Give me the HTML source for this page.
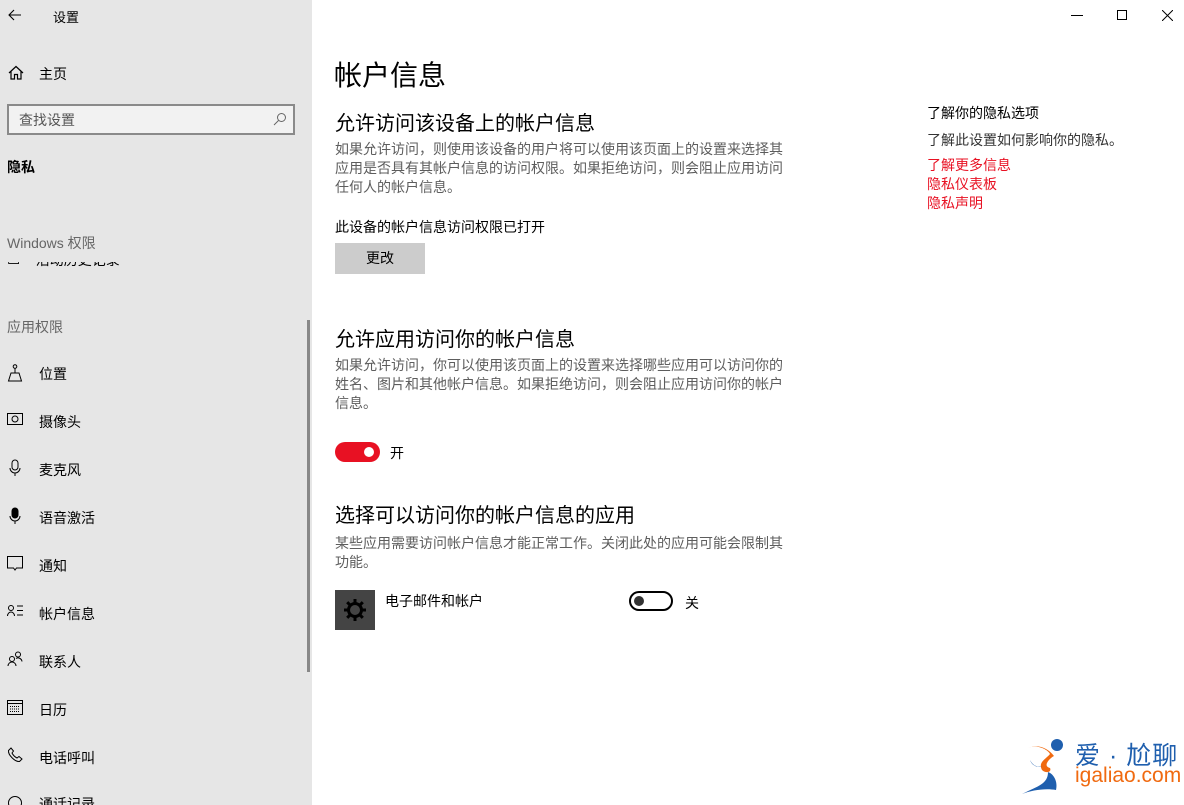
<!DOCTYPE html>
<html style="height:805px;overflow:hidden"><head><meta charset="utf-8"><style>
*{margin:0;padding:0;box-sizing:border-box}
body{width:1184px;height:805px;overflow:hidden;background:#fff;font-family:"Liberation Sans","Noto Sans CJK SC",sans-serif;color:#000;position:relative}
.a{position:absolute;white-space:nowrap}
#side{position:absolute;left:0;top:0;width:312px;height:805px;background:#e6e6e6;overflow:hidden}
.nav{font-size:14px}
.ic{position:absolute;left:7px}
.g{color:#5d5d5d;font-size:14px;line-height:19px}
.h2{font-size:20px}
.r{color:#e81123;font-size:14px}
</style></head><body>
<div id="side">
<svg class="a" style="left:8px;top:9px" width="14" height="12" viewBox="0 0 14 12" fill="none" stroke="#000" stroke-width="1.1"><path d="M13 6H1M6 1L1 6L6 11"/></svg>
<div class="a" style="left:53px;top:7px;font-size:13px">设置</div>
<svg class="a" style="left:8px;top:65px" width="16" height="16" viewBox="0 0 16 16" fill="none" stroke="#000" stroke-width="1.2"><path d="M1 8L8 1.5L15 8M3 6.5V14H6.5V9.5H9.5V14H13V6.5"/></svg>
<div class="a nav" style="left:39px;top:64px">主页</div>
<div class="a" style="left:7px;top:104px;width:288px;height:31px;border:2px solid #8a8a8a;background:#f2f2f2"></div>
<div class="a" style="left:19px;top:110px;font-size:14px;color:#555">查找设置</div>
<svg class="a" style="left:273px;top:112px" width="14" height="14" viewBox="0 0 14 14" fill="none" stroke="#666" stroke-width="1"><circle cx="8.5" cy="5.5" r="4"/><path d="M5.5 8.5L1 13"/></svg>
<div class="a" style="left:7px;top:157px;font-size:14px;font-weight:bold">隐私</div>
<div class="a" style="left:7px;top:233px;font-size:14px;color:#666">Windows 权限</div>
<div class="a" style="left:7px;top:262px;height:6px;overflow:hidden;width:200px"><div style="margin-top:-12px;font-size:14px">▭&nbsp;&nbsp;&nbsp; 活动历史记录</div></div>
<div class="a" style="left:7px;top:317px;font-size:14px;color:#666">应用权限</div>
<div class="a" style="left:307px;top:320px;width:3px;height:352px;background:#888"></div>

<svg class="ic a" style="top:364px" width="16" height="18" viewBox="0 0 16 18" fill="none" stroke="#000" stroke-width="1"><circle cx="8" cy="2.5" r="1.8"/><path d="M8 4.5V9M4 9H12L14.5 17H1.5Z"/></svg>
<div class="a nav" style="left:39px;top:364px">位置</div>
<svg class="ic a" style="top:412px" width="16" height="14" viewBox="0 0 16 14" fill="none" stroke="#000" stroke-width="1"><rect x="0.5" y="1.5" width="15" height="11"/><circle cx="8" cy="7" r="3"/></svg>
<div class="a nav" style="left:39px;top:412px">摄像头</div>
<svg class="ic a" style="top:459px" width="16" height="18" viewBox="0 0 16 18" fill="none" stroke="#000" stroke-width="1"><rect x="5" y="1" width="6" height="10" rx="3"/><path d="M3 9a5 5 0 0 0 10 0M8 14V17"/></svg>
<div class="a nav" style="left:39px;top:460px">麦克风</div>
<svg class="ic a" style="top:507px" width="16" height="18" viewBox="0 0 16 18" stroke="#000" stroke-width="1"><rect x="5" y="1" width="6" height="10" rx="3" fill="#000"/><path fill="none" d="M3 9a5 5 0 0 0 10 0M8 14V17"/></svg>
<div class="a nav" style="left:39px;top:508px">语音激活</div>
<svg class="ic a" style="top:556px" width="16" height="16" viewBox="0 0 16 16" fill="none" stroke="#000" stroke-width="1"><path d="M0.5 0.5H15.5V12H9.5L8 14L6.5 12H0.5Z"/></svg>
<div class="a nav" style="left:39px;top:556px">通知</div>
<svg class="ic a" style="top:604px" width="17" height="14" viewBox="0 0 17 14" fill="none" stroke="#000" stroke-width="1"><circle cx="4" cy="4" r="2.5"/><path d="M0.5 12a3.5 4 0 0 1 7 0M10 2H16M10 6.5H16M10 11H16"/></svg>
<div class="a nav" style="left:39px;top:604px">帐户信息</div>
<svg class="ic a" style="top:651px" width="16" height="16" viewBox="0 0 16 16" fill="none" stroke="#000" stroke-width="1"><circle cx="5" cy="8" r="2.5"/><path d="M1 15a4 4 0 0 1 8 0"/><circle cx="11" cy="3.5" r="2.5"/><path d="M9 7.5a4 4 0 0 1 6 3"/></svg>
<div class="a nav" style="left:39px;top:652px">联系人</div>
<svg class="ic a" style="top:699px" width="16" height="16" viewBox="0 0 16 16" fill="none" stroke="#000" stroke-width="1"><rect x="0.5" y="1.5" width="15" height="14"/><path d="M0.5 4.5H15.5"/><path d="M3 7.5H13M3 10H13M3 12.5H13" stroke-dasharray="1 1"/></svg>
<div class="a nav" style="left:39px;top:700px">日历</div>
<svg class="ic a" style="top:747px" width="16" height="16" viewBox="0 0 16 16" fill="none" stroke="#000" stroke-width="1"><path d="M4 1L1.5 3.5C1 8 8 15 12.5 14.5L15 12L12 9.5L10 11C8 10 6 8 5 6L6.5 4Z"/></svg>
<div class="a nav" style="left:39px;top:748px">电话呼叫</div>
<svg class="ic a" style="top:795px" width="16" height="16" viewBox="0 0 16 16" fill="none" stroke="#000" stroke-width="1"><circle cx="8" cy="8" r="6.5"/></svg>
<div class="a nav" style="left:39px;top:794px">通话记录</div>
</div>

<div class="a" style="left:1071px;top:15px;width:12px;height:1px;background:#000"></div>
<div class="a" style="left:1117px;top:10px;width:10px;height:10px;border:1px solid #000"></div>
<svg class="a" style="left:1162px;top:10px" width="11" height="11" viewBox="0 0 11 11" stroke="#000" stroke-width="1"><path d="M0 0L11 11M11 0L0 11"/></svg>

<div class="a" style="left:334px;top:54px;font-size:28px">帐户信息</div>
<div class="a h2" style="left:335px;top:107px">允许访问该设备上的帐户信息</div>
<div class="a g" style="left:335px;top:140px">如果允许访问，则使用该设备的用户将可以使用该页面上的设置来选择其<br>应用是否具有其帐户信息的访问权限。如果拒绝访问，则会阻止应用访问<br>任何人的帐户信息。</div>
<div class="a" style="left:335px;top:217px;font-size:14px">此设备的帐户信息访问权限已打开</div>
<div class="a" style="left:335px;top:243px;width:90px;height:31px;background:#ccc;font-size:14px;text-align:center;line-height:31px">更改</div>

<div class="a h2" style="left:335px;top:323px">允许应用访问你的帐户信息</div>
<div class="a g" style="left:335px;top:356px">如果允许访问，你可以使用该页面上的设置来选择哪些应用可以访问你的<br>姓名、图片和其他帐户信息。如果拒绝访问，则会阻止应用访问你的帐户<br>信息。</div>
<div class="a" style="left:335px;top:442px;width:45px;height:20px;border-radius:10px;background:#e81123"></div>
<div class="a" style="left:364px;top:447px;width:10px;height:10px;border-radius:5px;background:#fff"></div>
<div class="a" style="left:390px;top:443px;font-size:14px">开</div>

<div class="a h2" style="left:335px;top:499px">选择可以访问你的帐户信息的应用</div>
<div class="a g" style="left:335px;top:534px">某些应用需要访问帐户信息才能正常工作。关闭此处的应用可能会限制其<br>功能。</div>
<div class="a" style="left:335px;top:590px;width:40px;height:40px;background:#444"></div>
<svg class="a" style="left:340px;top:595px" width="30" height="30" viewBox="0 0 30 30"><g stroke="#000" stroke-width="3"><path d="M15 4V26M4 15H26M7.2 7.2L22.8 22.8M22.8 7.2L7.2 22.8"/></g><circle cx="15" cy="15" r="8" fill="#000"/><circle cx="15" cy="15" r="5" fill="#444"/></svg>
<div class="a" style="left:385px;top:591px;font-size:14px">电子邮件和帐户</div>
<div class="a" style="left:629px;top:591px;width:44px;height:20px;border-radius:10px;border:2px solid #000"></div>
<div class="a" style="left:634px;top:596px;width:10px;height:10px;border-radius:5px;background:#333"></div>
<div class="a" style="left:685px;top:593px;font-size:14px">关</div>

<div class="a" style="left:927px;top:103px;font-size:14px">了解你的隐私选项</div>
<div class="a" style="left:927px;top:130px;font-size:14px;color:#333">了解此设置如何影响你的隐私。</div>
<div class="a r" style="left:927px;top:155px">了解更多信息</div>
<div class="a r" style="left:927px;top:174px">隐私仪表板</div>
<div class="a r" style="left:927px;top:193px">隐私声明</div>

<svg class="a" style="left:1020px;top:738px" width="60" height="58" viewBox="0 0 60 58"><circle cx="37" cy="7" r="6" fill="#1f5fae"/><path d="M8 10C18 6 28 12 30 16C25 22 18 24 22 32C26 36 32 34 30 30C22 28 30 20 34 18C28 10 18 6 8 10Z" fill="#f06a10"/><path d="M28 34C34 36 38 44 36 52C26 50 12 52 2 56C18 48 28 46 28 34Z" fill="#1f5fae"/><path d="M10 22C12 28 18 30 22 28C16 30 12 26 10 22Z" fill="#1f5fae"/></svg>
<div class="a" style="left:1075px;top:736px;font-size:25px;color:#1f5fae;letter-spacing:1px">爱 · 尬聊</div>
<div class="a" style="left:1075px;top:764px;font-size:21px;color:#f06a10">igaliao.com</div>
</body></html>
